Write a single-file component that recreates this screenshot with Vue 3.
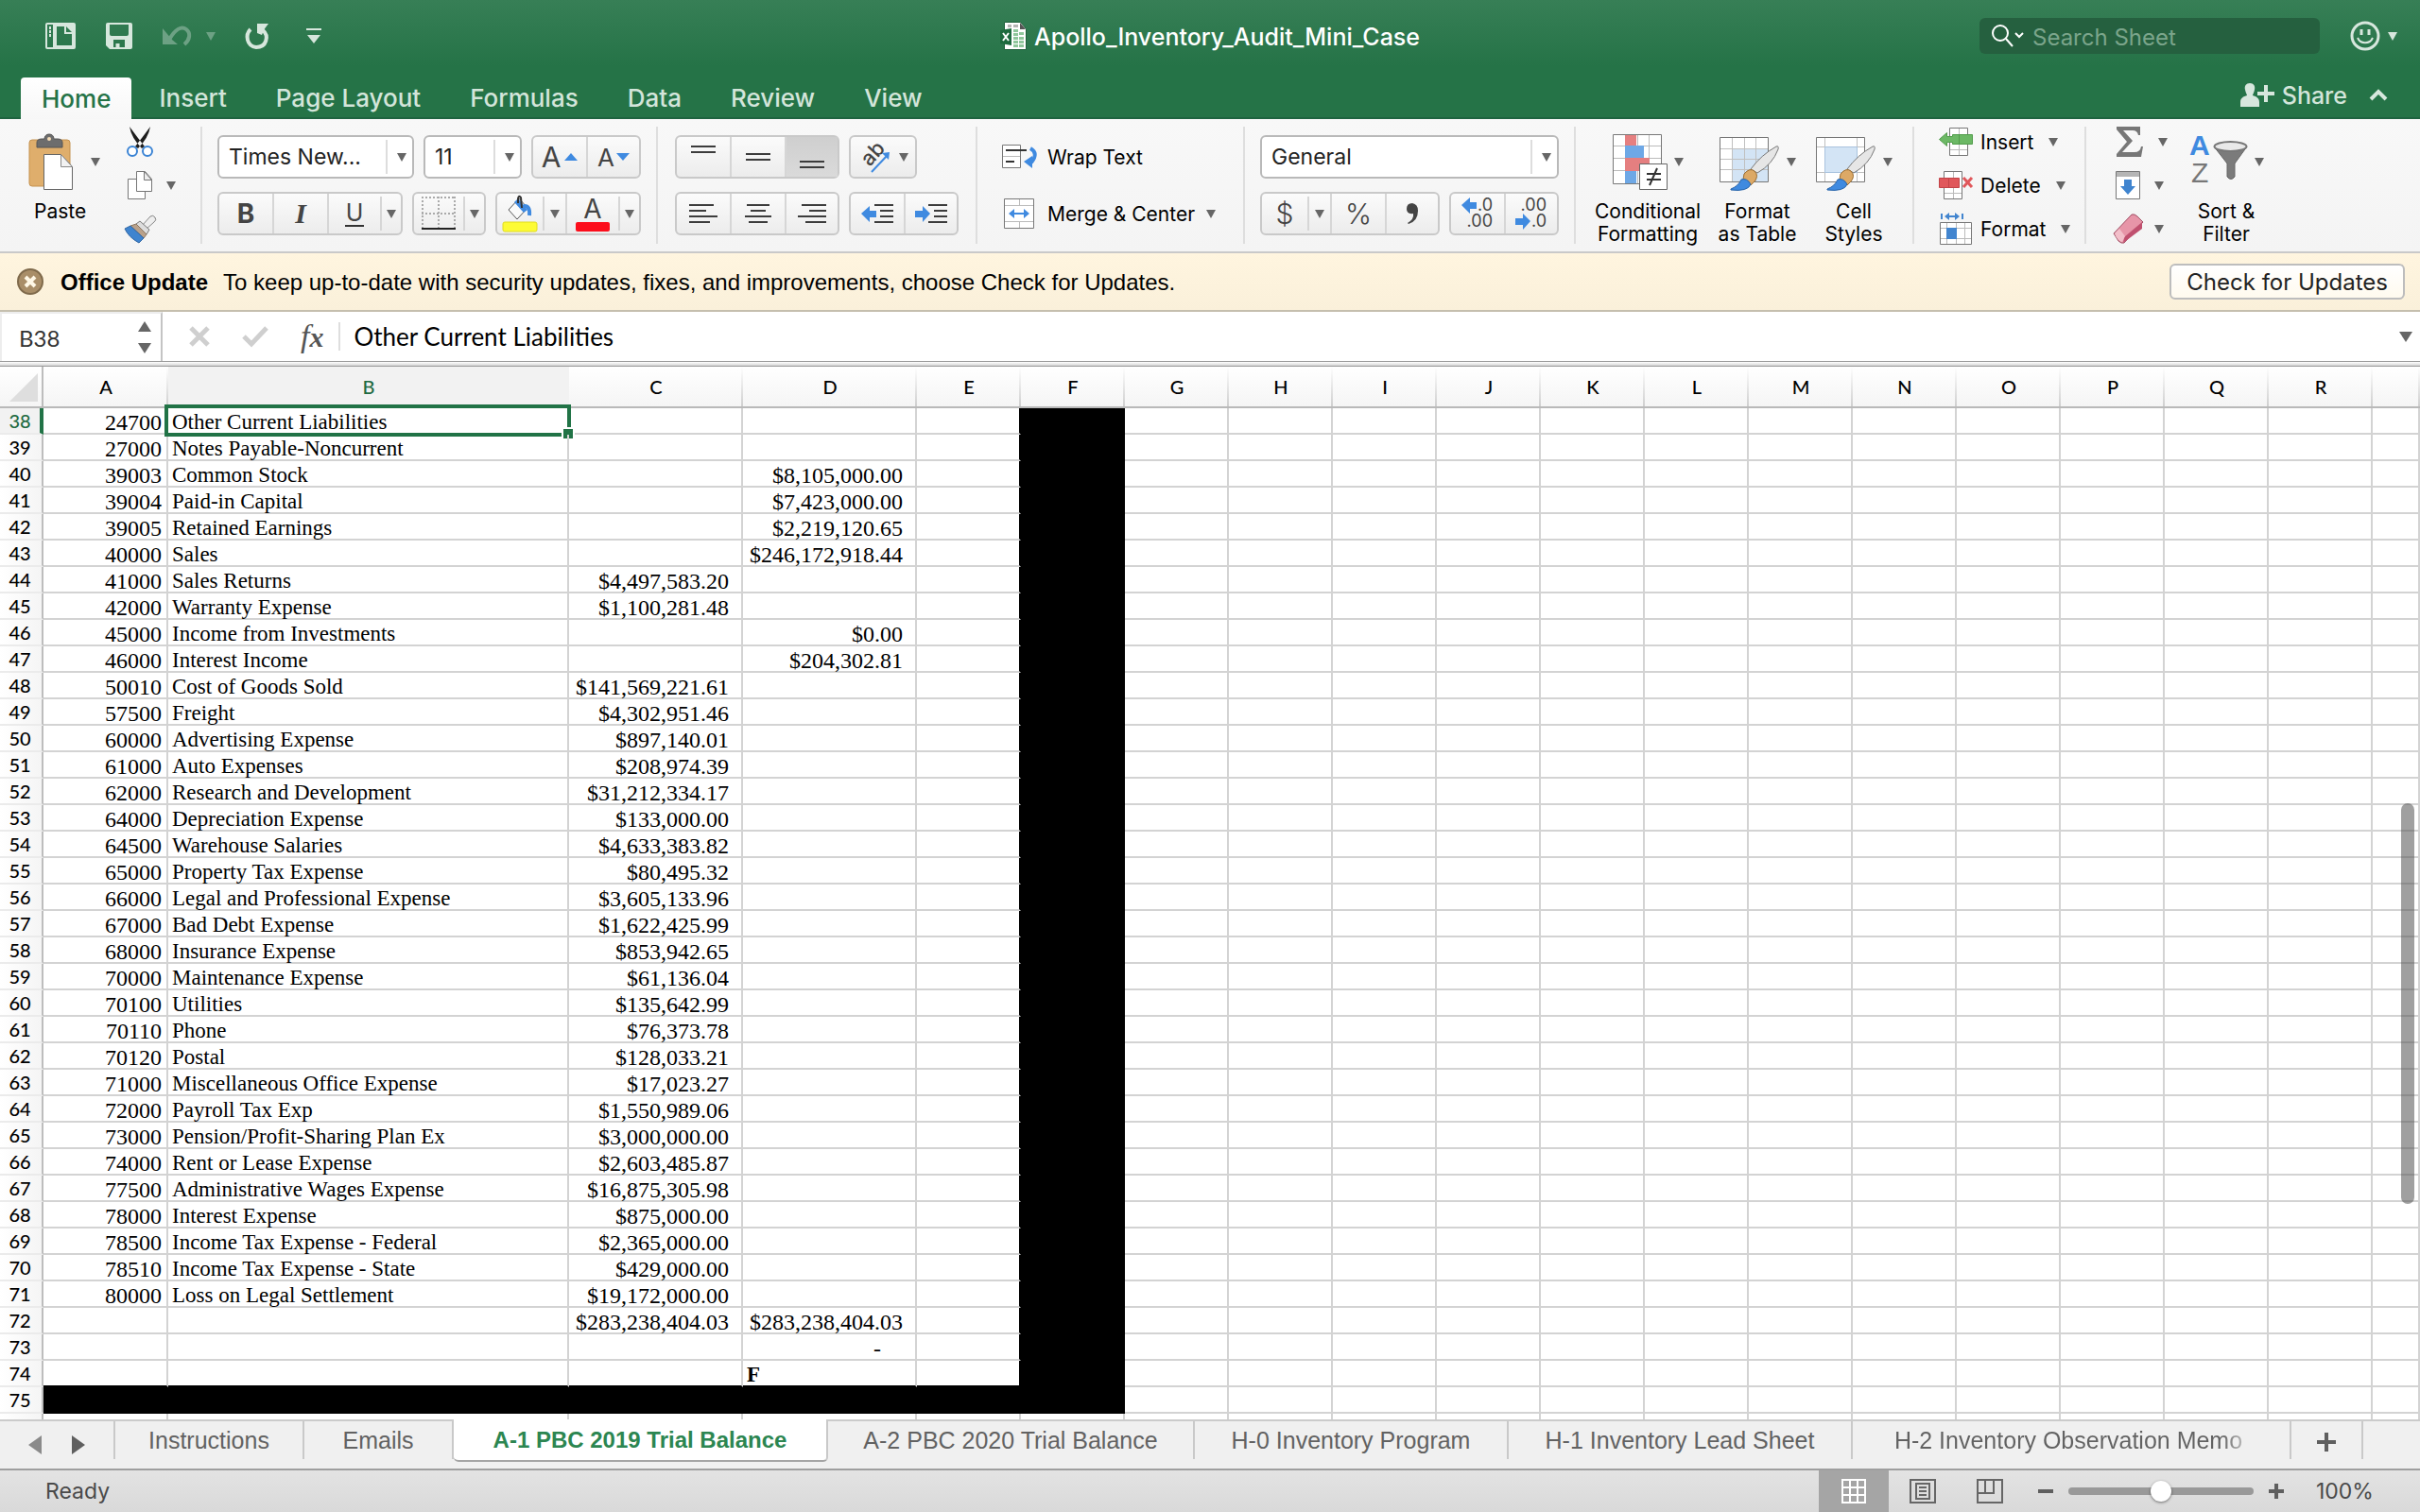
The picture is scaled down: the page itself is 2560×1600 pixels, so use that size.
<template>
  <div class="app">

    <header class="top">
      <div class="title-bar">
        <div class="quick">
          <button aria-label="Side panel">
            <svg width="32" height="28" viewBox="0 0 32 28">
              <path fill="#d7e7dd" fill-rule="evenodd" d="M2 0h28q2 0 2 2v24q0 2-2 2H2q-2 0-2-2V2q0-2 2-2zM2 2v24h6V2zM12 4v20h16V10l-6-6z" />
              <path fill="#d7e7dd" d="M4 4h2v3H4zM4 8h2v3H4zM4 12h2v3H4zM20 4h2v6h6v2h-8z" />
            </svg>
          </button>
          <button aria-label="Save">
            <svg width="28" height="28" viewBox="0 0 28 28">
              <path fill="#d7e7dd" fill-rule="evenodd" d="M2 0h24q2 0 2 2v24q0 2-2 2H4l-4-4V2q0-2 2-2zM4 2v10q0 2 2 2h16q2 0 2-2V2zM8 26h2.500v-4h4v4H20v-8H8z" />
            </svg>
          </button>
          <div class="undo">
            <button aria-label="Undo">
              <svg width="30" height="22" viewBox="0 0 30 22">
                <path fill="#6da184" d="M0 3v17h16l-6-5z" />
                <path fill="none" stroke="#6da184" stroke-width="4" d="M7 15C13 4 20 0 25 4c5 4 4 11-2 16" />
              </svg>
            </button>
            <i class="caret faded"></i>
          </div>
          <button aria-label="Repeat">
            <svg width="24" height="28" viewBox="0 0 24 28">
              <path fill="none" stroke="#d7e7dd" stroke-width="4" d="M5 7C-1 13 1 25 11 26c11 0 14-12 7-18" />
              <path fill="#d7e7dd" d="M12 1h12l-3 4-2 3-2 5-5-2z" />
            </svg>
          </button>
          <button class="customize" aria-label="Customize toolbar">
            <svg width="16" height="16" viewBox="0 0 16 16">
              <path fill="#d7e7dd" d="M0 0h16v2H0zM1 7h14l-7 9z" />
            </svg>
          </button>
        </div>

        <div class="doc">
          <svg width="28" height="30" viewBox="0 0 28 30">
            <path fill="#fff" stroke="#1d5f3a" d="M4.500.5h17l6 7v22h-23z" />
            <path fill="#b5b5b5" d="M8 3h4v3H8zM14 3h5v3h-5z" />
            <path fill="#8fc79b" d="M14 8h5v3h-5zM14 12h5v3h-5zM14 16h5v3h-5zM14 20h5v3h-5zM14 24h5v3h-5zM20 11h5v3h-5zM20 16h5v3h-5zM20 20h5v3h-5zM20 24h5v3h-5z" />
            <path fill="#555" d="M21 1v7h6z" />
            <path fill="#1d6a3e" d="M0 9l12-2v18L0 23z" />
            <path stroke="#fff" stroke-width="2" d="M3 12l6 8M9 12l-6 8" />
          </svg>
          <h1>Apollo_Inventory_Audit_Mini_Case</h1>
        </div>

        <div class="title-right">
          <label class="search">
            <svg width="36" height="26" viewBox="0 0 36 26" fill="none" stroke="#fff" stroke-width="2">
              <circle cx="10" cy="10" r="8" />
              <path d="M16 16l7 8M26 10l4 4 4-4" />
            </svg>
            <input type="text" placeholder="Search Sheet" aria-label="Search Sheet" />
          </label>
          <button class="smile" aria-label="Feedback">
            <svg width="32" height="32" viewBox="0 0 32 32" fill="none" stroke="#d7e7dd" stroke-width="3">
              <circle cx="16" cy="16" r="14" />
              <path d="M12 9v6M20 9v6" />
              <path stroke-width="2" d="M8 18c3 7 13 7 16 0" />
            </svg>
            <i class="caret pale"></i>
          </button>
        </div>
      </div>

      <nav class="tabs">
        <button v-for="tab in ribbonTabs" :key="tab" :class="{ active: tab === 'Home' }">{{ tab }}</button>
        <div class="share">
          <button>
            <svg width="36" height="26" viewBox="0 0 36 26" fill="#d7e7dd">
              <path d="M10 0c4 0 6 3 5 7-.5 3-2 5-2 6 4 1 7 3 7 7v5H0v-5c0-4 3-6 7-7 0-1-1.500-3-2-6-1-4 1-7 5-7z" />
              <path d="M25 2h4v7h7v4h-7v7h-4v-7h-7V9h7z" />
            </svg>
            Share
          </button>
          <button aria-label="Collapse ribbon">
            <svg width="20" height="12" viewBox="0 0 20 12" fill="none" stroke="#d7e7dd" stroke-width="4">
              <path d="M2 10l8-8 8 8" />
            </svg>
          </button>
        </div>
      </nav>
    </header>

    <section class="ribbon">
      <div class="group clipboard">
        <button class="paste">
          <span class="big-icon">
            <svg width="48" height="60" viewBox="0 0 48 60">
              <rect x="1" y="7" width="43" height="49" rx="3" fill="#dfae6c" stroke="#c4914e" />
              <path fill="#6d6d6d" stroke="#555" d="M9 10q0-4 5-4h3c0-3 2-5 5-5s5 2 5 5h4q5 0 5 4v5H9z" />
              <circle cx="22" cy="6" r="2" fill="#f4dcb8" />
              <path fill="#fff" stroke="#666" d="M16.500 22.500h18l12 13v24h-30z" />
              <path fill="#f2f2f2" stroke="#888" d="M34.500 22.500v13h12z" />
            </svg>
            <i class="caret"></i>
          </span>
          <span class="paste-label">Paste</span>
        </button>
        <div class="stack">
          <button aria-label="Cut">
            <svg width="32" height="32" viewBox="0 0 32 32">
              <path fill="#1c1c1c" d="M5 0q8 11 16 21l-3 2Q7 12 5 0zM27 0q-8 11-16 21l3 2Q25 12 27 0z" />
              <ellipse cx="8" cy="26" rx="5" ry="5" fill="#fff" stroke="#3a83d4" stroke-width="2" />
              <ellipse cx="24" cy="26" rx="5" ry="5" fill="#fff" stroke="#3a83d4" stroke-width="2" />
            </svg>
          </button>
          <button aria-label="Copy">
            <svg width="32" height="32" viewBox="0 0 32 32" fill="#fff" stroke="#777">
              <path d="M3.500 9.500h18v21h-18z" />
              <path d="M12.500 1.500h9l7 8v13h-16z" />
              <path fill="#eee" d="M20.500 1.500v9h8z" />
            </svg>
            <i class="caret"></i>
          </button>
          <button aria-label="Format painter">
            <svg width="32" height="32" viewBox="0 0 32 32">
              <path fill="#eee" stroke="#888" d="M18 13l9-10q3-2 5 1t-1 5L22 17z" />
              <path fill="#ddd" stroke="#777" d="M12 11l4-3 10 9-3 5z" />
              <path fill="#b9a18a" stroke="#8a7660" d="M6 13l6-2 11 11-3 4z" />
              <path fill="#3f84cf" stroke="#2f65a3" d="M0 16l6-3 14 13-5 5Q4 25 0 16z" />
            </svg>
          </button>
        </div>
      </div>

      <div class="group font">
        <div class="line">
          <span class="pick font-name">
            <select aria-label="Font"><option>Times New...</option></select>
            <i class="caret"></i>
          </span>
          <span class="pick font-size">
            <select aria-label="Font size"><option>11</option></select>
            <i class="caret"></i>
          </span>
          <div class="btns">
            <button class="w56 grow" aria-label="Increase font size"><span>A</span><i class="tri up"></i></button>
            <button class="w56 shrink" aria-label="Decrease font size"><span>A</span><i class="tri down"></i></button>
          </div>
        </div>
        <div class="line">
          <div class="btns">
            <button class="w56 bold">B</button>
            <button class="w58 italic">I</button>
            <button class="w56 under"><span>U</span></button>
            <button class="drop" aria-label="Underline options"><i class="caret"></i></button>
          </div>
          <div class="btns">
            <button class="w52" aria-label="Borders">
              <svg width="36" height="36" viewBox="0 0 36 36" fill="none">
                <path stroke="#aaa" stroke-width="2" stroke-dasharray="2 2" d="M0 1h36M1 0v34M18 0v34M35 0v34M0 18h36" />
                <path stroke="#222" stroke-width="2" d="M0 34h36" />
              </svg>
            </button>
            <button class="drop" aria-label="Border options"><i class="caret"></i></button>
          </div>
          <div class="btns">
            <button class="w48" aria-label="Fill color">
              <svg width="36" height="40" viewBox="0 0 36 40">
                <path fill="#fafafa" stroke="#555" d="M6 16L17 4l9 10-11 12z" />
                <path fill="#3f8ae0" d="M12 8l4-4 10 12-4 3z" />
                <path fill="none" stroke="#3f8ae0" stroke-width="4" d="M22 12q7-1 6 10" />
                <path fill="none" stroke="#333" stroke-width="2" d="M20 14l-1-11q-2-3-3 1v5" />
                <rect y="29" width="36" height="10" rx="2" fill="#fdfb35" stroke="#e0dc20" />
              </svg>
            </button>
            <button class="drop w24" aria-label="Fill options"><i class="caret"></i></button>
            <button class="w56 font-color" aria-label="Font color"><span>A</span><i></i></button>
            <button class="drop" aria-label="Font color options"><i class="caret"></i></button>
          </div>
        </div>
      </div>

      <div class="group align">
        <div class="line">
          <div class="btns">
            <button class="w56" aria-label="Top align"><svg width="26" height="32"><path d="M0 5h26M0 11h26" /></svg></button>
            <button class="w58" aria-label="Middle align"><svg width="26" height="32"><path d="M0 13h26M0 19h26" /></svg></button>
            <button class="w56 pressed" aria-label="Bottom align"><svg width="26" height="32"><path d="M0 21h26M0 27h26" /></svg></button>
          </div>
          <div class="btns">
            <button class="orient" aria-label="Orientation">
              <svg width="34" height="34" viewBox="0 0 34 34">
                <text x="0" y="0" transform="translate(13 28) rotate(-48)" class="svg-ab">ab</text>
                <path class="blue-line" d="M15 33L31 16" />
                <path class="arrow" d="M26 13l8-1-1 8z" />
              </svg>
              <i class="caret"></i>
            </button>
          </div>
        </div>
        <div class="line">
          <div class="btns">
            <button class="w56" aria-label="Align left"><svg width="30" height="22"><path d="M0 2h26M0 8h18M0 14h30M0 20h22" /></svg></button>
            <button class="w58" aria-label="Center"><svg width="28" height="22"><path d="M2 2h24M6 8h16M0 14h28M4 20h20" /></svg></button>
            <button class="w56" aria-label="Align right"><svg width="30" height="22"><path d="M4 2h26M12 8h18M0 14h30M8 20h22" /></svg></button>
          </div>
          <div class="btns">
            <button class="w56" aria-label="Decrease indent">
              <svg width="34" height="22"><path d="M14 2h20M20 8h14M20 14h14M14 20h20" /><path class="arrow" d="M0 11l9-8v5h7v7H9v5z" /></svg>
            </button>
            <button class="w56" aria-label="Increase indent">
              <svg width="34" height="22"><path d="M14 2h20M20 8h14M20 14h14M14 20h20" /><path class="arrow" d="M16 11L8 3v5H0v7h8v5z" /></svg>
            </button>
          </div>
        </div>
      </div>

      <div class="group wrap">
        <button class="row-btn">
          <svg width="40" height="32" viewBox="0 0 40 32">
            <path fill="#fff" stroke="#777" d="M.5 3.500h19v24H.5z" />
            <path stroke="#bbb" d="M1 15.500h18" />
            <path stroke="#333" stroke-width="2" d="M4 9h22M4 21h9" />
            <path fill="none" stroke="#3f8ae0" stroke-width="4" d="M30 7q9 5 1 15" />
            <path fill="#3f8ae0" d="M23 21l9-6v13z" />
          </svg>
          Wrap Text
        </button>
        <button class="row-btn">
          <svg width="40" height="34" viewBox="0 0 40 34">
            <path fill="#fff" stroke="#777" d="M2.500 1.500h31v31h-31z" />
            <path stroke="#bbb" d="M3 8.500h30M3 25.500h30M18.500 2v6M18.500 26v6" />
            <path class="blue-line" d="M10 17h16" />
            <path fill="#3f8ae0" d="M7 17l6-5v10zM29 17l-6-5v10z" />
          </svg>
          Merge &amp; Center
          <i class="caret"></i>
        </button>
      </div>

      <div class="group number">
        <div class="line">
          <span class="pick format">
            <select aria-label="Number format"><option>General</option></select>
            <i class="caret"></i>
          </span>
        </div>
        <div class="line">
          <div class="btns">
            <button class="w48 sign">$</button>
            <button class="drop w24" aria-label="Currency options"><i class="caret"></i></button>
            <button class="w58 sign">%</button>
            <button class="w56" aria-label="Comma style">
              <svg width="14" height="24" viewBox="0 0 14 24"><path class="solid" d="M2 22q7-4 6-10-7 1-7-5 0-6 6-6 6 1 6 8 0 11-10 14z" /></svg>
            </button>
          </div>
          <div class="btns">
            <button class="w56" aria-label="Increase decimal">
              <svg width="34" height="34" viewBox="0 0 34 34">
                <path class="arrow" d="M0 8l9-8v5h7v7H9v5z" />
                <text x="33" y="14" class="svg-num">.0</text><text x="33" y="31" class="svg-num">.00</text>
              </svg>
            </button>
            <button class="w56" aria-label="Decrease decimal">
              <svg width="34" height="34" viewBox="0 0 34 34">
                <path class="arrow" d="M16 25l-8-8v5H0v7h8v5z" />
                <text x="33" y="14" class="svg-num">.00</text><text x="33" y="31" class="svg-num">.0</text>
              </svg>
            </button>
          </div>
        </div>
      </div>

      <div class="group styles">
        <button class="tall wide">
          <span class="big-icon">
            <svg width="58" height="58" viewBox="0 0 58 58">
              <path fill="#fff" stroke="#777" d="M.5.5h51v52H.5z" />
              <path stroke="#bbb" d="M13.500 1v51M38.500 1v51M26.500 1v51M1 12.500h50M1 25.500h50M1 38.500h50" />
              <path fill="#e57f80" d="M13 1h12v11H13zM13 25h26v14H13z" />
              <path fill="#6ea8e6" d="M13 12h20v13H13zM13 39h12v13H13z" />
              <path fill="#fff" stroke="#666" d="M28.500 31.500h29v27h-29z" />
              <path stroke="#333" stroke-width="2" d="M36 42h15M36 48h15M47 36l-8 18" />
            </svg>
            <i class="caret"></i>
          </span>
          Conditional<br>Formatting
        </button>
        <button class="tall">
          <span class="big-icon">
            <svg width="64" height="58" viewBox="0 0 64 58">
              <path fill="#fff" stroke="#777" d="M.5 3.500h51v47H.5z" />
              <path fill="#d3e4f5" d="M13 15h38v35H13z" />
              <path stroke="#c0c0c0" d="M13.500 4v46M26.500 4v46M38.500 4v46M1 15.500h50M1 26.500h50M1 37.500h50" />
              <path fill="#e6e6e6" stroke="#777" d="M33 37Q44 22 60 13q3-1 2 3-6 16-22 25z" />
              <path fill="#dca966" stroke="#9a6d32" d="M26 42q6-7 11-3 5 5 0 11l-4 4-8-6z" />
              <path fill="#3f8ae0" stroke="#2763a8" d="M12 58q8-3 11-10 6-2 10 5-3 8-21 6z" />
            </svg>
            <i class="caret"></i>
          </span>
          Format<br>as Table
        </button>
        <button class="tall">
          <span class="big-icon">
            <svg width="64" height="58" viewBox="0 0 64 58">
              <path fill="#fff" stroke="#777" d="M.5 3.500h51v47H.5z" />
              <path stroke="#c0c0c0" d="M9.500 4v46M43.500 4v46M1 13.500h50M1 40.500h50" />
              <path fill="#d3e4f5" stroke="#a9c3de" d="M9.500 13.500h34v27h-34z" />
              <path fill="#e6e6e6" stroke="#777" d="M33 37Q44 22 60 13q3-1 2 3-6 16-22 25z" />
              <path fill="#dca966" stroke="#9a6d32" d="M26 42q6-7 11-3 5 5 0 11l-4 4-8-6z" />
              <path fill="#3f8ae0" stroke="#2763a8" d="M12 58q8-3 11-10 6-2 10 5-3 8-21 6z" />
            </svg>
            <i class="caret"></i>
          </span>
          Cell<br>Styles
        </button>
      </div>

      <div class="group cells">
        <button class="cell-btn">
          <svg width="36" height="32" viewBox="0 0 36 32">
            <path fill="#fff" stroke="#777" d="M11.500 1.500h19v29h-19z" />
            <path stroke="#bbb" d="M12 24.500h18M21.500 2v6M21.500 19v11" />
            <path fill="#6cb865" stroke="#519c4b" d="M.5 13.500l8-7v4h6v-2h21v10h-21v-2h-6v4z" />
            <path stroke="#519c4b" d="M21.500 9v9" />
          </svg>
          Insert
          <i class="caret"></i>
        </button>
        <button class="cell-btn">
          <svg width="36" height="32" viewBox="0 0 36 32">
            <path fill="#fff" stroke="#777" d="M5.500 1.500h19v29h-19z" />
            <path stroke="#bbb" d="M6 24.500h18M15.500 2v6M15.500 19v11" />
            <path fill="#e0575b" stroke="#c24448" d="M.5 8.500h21v10H.5z" />
            <path stroke="#c24448" d="M10.500 9v9" />
            <path stroke="#e0575b" stroke-width="3" d="M26 8l9 10M35 8l-9 10" />
          </svg>
          Delete
          <i class="caret"></i>
        </button>
        <button class="cell-btn">
          <svg width="36" height="36" viewBox="0 0 36 36">
            <path fill="#fff" stroke="#777" d="M1.500 11.500h33v23h-33z" />
            <path stroke="#bbb" d="M8.500 12v22M18.500 12v22M27.500 12v22M2 17.500h32M2 28.500h32" />
            <path fill="#4285cf" d="M8 17h11v12H8z" />
            <path stroke="#4285cf" stroke-width="2" d="M3 2v6M25 2v6M9 5h10" />
            <path fill="#4285cf" d="M6 5l5-4v8zM22 5l-5-4v8z" />
          </svg>
          Format
          <i class="caret"></i>
        </button>
      </div>

      <div class="group editing">
        <div class="stack">
          <button class="sum" aria-label="AutoSum">
            <svg width="32" height="32" viewBox="0 0 32 32">
              <path fill="#777" d="M4 0h25v9h-2q-1-5-6-5H11l10 11L10 27h13q6 0 7-6h2l-2 11H4v-3l11-13L4 3z" />
            </svg>
            <i class="caret"></i>
          </button>
          <button aria-label="Fill">
            <svg width="32" height="32" viewBox="0 0 32 32">
              <path fill="#fff" stroke="#777" d="M3.500 1.500h25v29h-25z" />
              <path fill="#b5b5b5" d="M4 2h24v5H4z" />
              <path fill="#3f84cf" d="M12 10h8v7h4l-8 9-8-9h4z" />
            </svg>
            <i class="caret"></i>
          </button>
          <button aria-label="Clear">
            <svg width="32" height="32" viewBox="0 0 32 32">
              <path fill="#e795a8" stroke="#a04f64" d="M1 21L20 1q3-1 6 2l6 6-20 22q-3 1-6-2z" />
              <path fill="#c0506f" d="M31 9v7L11 31l1-6z" />
              <path fill="#f2bfca" d="M2 21l5-5 6 8-3 6q-6-2-8-9z" />
            </svg>
            <i class="caret"></i>
          </button>
        </div>
        <button class="tall">
          <span class="big-icon">
            <svg width="62" height="58" viewBox="0 0 62 58">
              <text x="0" y="22" class="az blue">A</text>
              <text x="2" y="51" class="az grey">Z</text>
              <path fill="#7b7b7b" stroke="#666" d="M26 13l14 18v14q4 5 8 0V31l13-18z" />
              <ellipse cx="43.500" cy="13" rx="17" ry="5" fill="#e9e9e9" stroke="#777" stroke-width="2" />
            </svg>
            <i class="caret"></i>
          </span>
          Sort &amp;<br>Filter
        </button>
      </div>
    </section>

    <section class="update">
      <button aria-label="Dismiss">
        <svg width="28" height="28" viewBox="0 0 28 28">
          <circle cx="14" cy="14" r="13" fill="#a98e68" stroke="#7f6a4b" stroke-width="2" />
          <path stroke="#fff8e6" stroke-width="4" d="M9 9l10 10M19 9L9 19" />
        </svg>
      </button>
      <p><strong>Office Update</strong>To keep up-to-date with security updates, fixes, and improvements, choose Check for Updates.</p>
      <button class="check">Check for Updates</button>
    </section>

    <section class="formula">
      <div class="name-box">
        <input type="text" value="B38" aria-label="Name box" />
        <button aria-label="Named cells"><i class="tri-up"></i><i class="tri-down"></i></button>
      </div>
      <div class="formula-tools">
        <button aria-label="Cancel">
          <svg width="22" height="22" viewBox="0 0 22 22"><path d="M2 2l18 18M20 2L2 20" /></svg>
        </button>
        <button aria-label="Enter">
          <svg width="28" height="22" viewBox="0 0 28 22"><path d="M2 11l8 8L26 2" /></svg>
        </button>
        <button class="fx"><span>f</span><span>x</span></button>
      </div>
      <input class="formula-text" type="text" value="Other Current Liabilities" aria-label="Formula" />
      <button class="expand" aria-label="Expand formula bar"><i class="tri-down"></i></button>
    </section>
    <div class="divider"></div>

    <main class="sheet">
      <table>
        <colgroup>
          <col class="c-num">
          <col v-for="col in columns" :key="col.name" :style="{ width: col.width + 'px' }">
          <col>
        </colgroup>
        <thead>
          <tr>
            <th class="corner"><svg width="30" height="30" viewBox="0 0 30 30"><path fill="#dedede" d="M30 0v30H0z" /></svg></th>
            <th v-for="col in columns" :key="col.name" :class="{ current: col.name === 'B' }">{{ col.name }}</th>
            <th></th>
          </tr>
        </thead>
        <tbody>
          <tr v-for="row in rows" :key="row.n" :class="{ black: row.n === 75 }">
            <th :class="{ current: row.n === 38 }">{{ row.n }}</th>
            <td class="acct">{{ row.a }}</td>
            <td class="name">
              {{ row.b }}
              <div v-if="row.n === 38" class="cursor"><i></i></div>
            </td>
            <td class="money">{{ row.c }}</td>
            <td class="money" :class="{ dash: row.n === 73, tick: row.n === 74 }">{{ row.d }}</td>
            <td class="edge"></td>
            <td class="bar"></td>
            <td v-for="k in 13" :key="k"></td>
          </tr>
          <tr>
            <th></th>
            <td v-for="k in 19" :key="k"></td>
          </tr>
        </tbody>
      </table>
      <div class="scroll-thumb"></div>
    </main>

    <nav class="sheet-tabs">
      <div class="arrows">
        <button aria-label="Previous sheet"><i class="left"></i></button>
        <button aria-label="Next sheet"><i class="right"></i></button>
      </div>
      <button
        v-for="sheet in sheets"
        :key="sheet.name"
        class="sheet-tab"
        :class="{ active: sheet.active, last: sheet.last }"
        :style="{ width: sheet.width + 'px' }"
      ><span>{{ sheet.name }}</span></button>
      <button class="add" aria-label="Add sheet">
        <svg width="20" height="20" viewBox="0 0 20 20"><path stroke="#5f5f5f" stroke-width="4" d="M10 0v20M0 10h20" /></svg>
      </button>
    </nav>

    <footer class="status">
      <span class="ready">Ready</span>
      <button class="view on" aria-label="Normal view">
        <svg width="26" height="26" viewBox="0 0 26 26" fill="none" stroke="#fff" stroke-width="2">
          <path d="M1 1h24v24H1zM9 1v24M17 1v24M1 9h24M1 17h24" />
        </svg>
      </button>
      <button class="view" aria-label="Page layout view">
        <svg width="28" height="26" viewBox="0 0 28 26" fill="none" stroke="#666" stroke-width="2">
          <path d="M1 1h26v24H1zM7 5h14v16H7zM10 9h8M10 13h8M10 17h8" />
        </svg>
      </button>
      <button class="view" aria-label="Page break view">
        <svg width="28" height="26" viewBox="0 0 28 26" fill="none" stroke="#666" stroke-width="2">
          <path d="M1 1h26v24H1zM9 1v14M18 1v14H1" />
        </svg>
      </button>
      <button class="zoom out" aria-label="Zoom out"><svg width="16" height="16"><path d="M0 8h16" /></svg></button>
      <input v-model="zoom" type="range" min="0" max="200" aria-label="Zoom" />
      <button class="zoom" aria-label="Zoom in"><svg width="16" height="16"><path d="M0 8h16M8 0v16" /></svg></button>
      <span class="percent">{{ zoom }}%</span>
    </footer>

  </div>
</template>


<script setup>
import { ref } from "vue";

const zoom = ref(100);

const ribbonTabs = ["Home", "Insert", "Page Layout", "Formulas", "Data", "Review", "View"];

const columns = [
  { name: "A", width: 132 },
  { name: "B", width: 424 },
  { name: "C", width: 184 },
  { name: "D", width: 184 },
  ...[..."EFGHIJKLMNOPQR"].map((name) => ({ name, width: 110 }))
];

const sheets = [
  { name: "Instructions", width: 200 },
  { name: "Emails", width: 158 },
  { name: "A-1 PBC 2019 Trial Balance", width: 396, active: true },
  { name: "A-2 PBC 2020 Trial Balance", width: 388 },
  { name: "H-0 Inventory Program", width: 332 },
  { name: "H-1 Inventory Lead Sheet", width: 364 },
  { name: "H-2 Inventory Observation Memo", width: 464, last: true }
];

// account number, name, debit, credit
const entries = [
  ["24700", "Other Current Liabilities"],
  ["27000", "Notes Payable-Noncurrent"],
  ["39003", "Common Stock", "", "$8,105,000.00"],
  ["39004", "Paid-in Capital", "", "$7,423,000.00"],
  ["39005", "Retained Earnings", "", "$2,219,120.65"],
  ["40000", "Sales", "", "$246,172,918.44"],
  ["41000", "Sales Returns", "$4,497,583.20"],
  ["42000", "Warranty Expense", "$1,100,281.48"],
  ["45000", "Income from Investments", "", "$0.00"],
  ["46000", "Interest Income", "", "$204,302.81"],
  ["50010", "Cost of Goods Sold", "$141,569,221.61"],
  ["57500", "Freight", "$4,302,951.46"],
  ["60000", "Advertising Expense", "$897,140.01"],
  ["61000", "Auto Expenses", "$208,974.39"],
  ["62000", "Research and Development", "$31,212,334.17"],
  ["64000", "Depreciation Expense", "$133,000.00"],
  ["64500", "Warehouse Salaries", "$4,633,383.82"],
  ["65000", "Property Tax Expense", "$80,495.32"],
  ["66000", "Legal and Professional Expense", "$3,605,133.96"],
  ["67000", "Bad Debt Expense", "$1,622,425.99"],
  ["68000", "Insurance Expense", "$853,942.65"],
  ["70000", "Maintenance Expense", "$61,136.04"],
  ["70100", "Utilities", "$135,642.99"],
  ["70110", "Phone", "$76,373.78"],
  ["70120", "Postal", "$128,033.21"],
  ["71000", "Miscellaneous Office Expense", "$17,023.27"],
  ["72000", "Payroll Tax Exp", "$1,550,989.06"],
  ["73000", "Pension/Profit-Sharing Plan Ex", "$3,000,000.00"],
  ["74000", "Rent or Lease Expense", "$2,603,485.87"],
  ["77500", "Administrative Wages Expense", "$16,875,305.98"],
  ["78000", "Interest Expense", "$875,000.00"],
  ["78500", "Income Tax Expense - Federal", "$2,365,000.00"],
  ["78510", "Income Tax Expense - State", "$429,000.00"],
  ["80000", "Loss on Legal Settlement", "$19,172,000.00"],
  ["", "", "$283,238,404.03", "$283,238,404.03"],
  ["", "", "", "-"],
  ["", "", "", "F"],
  []
];

const rows = entries.map(([a, b, c, d], i) => ({ n: 38 + i, a, b, c, d }));
</script>

<style>
body {
  margin: 0;
}
</style>

<style scoped>
.app {
  height: 100vh;
  display: flex;
  flex-direction: column;
  overflow: hidden;
  background: #fff;
  color: #000;
  font-family: Inter, "Liberation Sans", sans-serif;
  font-size: 21px;
}

.app * {
  box-sizing: border-box;
}

button {
  padding: 0;
  border: 0;
  background: none;
  color: inherit;
  font: inherit;
  white-space: nowrap;
}

svg {
  display: block;
  flex: none;
  overflow: visible;
}

input,
select {
  min-width: 0;
  margin: 0;
  padding: 0;
  border: 0;
  outline: none;
  background: none;
  color: inherit;
  font: inherit;
}

.caret {
  flex: none;
  border: 5px solid transparent;
  border-top: 9px solid #666;
  border-bottom: 0;
}

.caret.faded {
  border-top-color: #6da184;
}

.caret.pale {
  border-top-color: #d7e7dd;
}

/* green header */
.top {
  flex: none;
  background: linear-gradient(#377f56, #257347 70px);
  border-bottom: 2px solid #1e6340;
}

.title-bar {
  height: 76px;
  display: grid;
  grid-template-columns: 1fr auto 1fr;
  align-items: center;
}

.quick {
  display: flex;
  align-items: center;
  gap: 32px;
  padding-left: 48px;
}

.undo {
  display: flex;
  align-items: center;
  gap: 16px;
}

.customize {
  width: 32px;
  display: flex;
  justify-content: center;
}

.doc {
  display: flex;
  align-items: center;
  gap: 8px;
}

.doc h1 {
  margin: 0;
  padding-top: 2px;
  color: #fff;
  font-size: 25px;
  font-weight: 500;
}

.title-right {
  display: flex;
  align-items: center;
  justify-content: flex-end;
  gap: 32px;
  padding-right: 24px;
}

.search {
  width: 360px;
  height: 38px;
  display: flex;
  align-items: center;
  gap: 8px;
  padding: 0 12px;
  border-radius: 6px;
  background: #25603f;
}

.search input {
  flex: 1;
  padding-top: 2px;
  color: #fff;
  font-size: 24px;
}

.search input::placeholder {
  color: #7ba58b;
}

.smile {
  display: flex;
  align-items: center;
  gap: 8px;
}

.tabs {
  height: 48px;
  display: flex;
  align-items: flex-end;
  gap: 6px;
  padding-left: 22px;
  color: #d3e5da;
  font-size: 26px;
  font-weight: 500;
}

.tabs > button {
  height: 42px;
  padding: 0 23px;
}

.tabs > .active {
  height: 44px;
  margin-bottom: -2px;
  padding: 0 22px;
  border-radius: 4px 4px 0 0;
  background: linear-gradient(#fff, #f7f7f7);
  color: #257347;
}

.share {
  height: 46px;
  display: flex;
  align-items: center;
  gap: 23px;
  margin-left: auto;
  padding-right: 34px;
  font-size: 25px;
}

.share button {
  display: flex;
  align-items: center;
  gap: 8px;
}

/* ribbon */
.ribbon {
  flex: none;
  height: 142px;
  display: flex;
  border-bottom: 2px solid #c9c9c9;
  background: linear-gradient(#f8f8f8, #f4f4f4);
}

.group {
  flex: none;
  display: flex;
  margin: 8px 0;
  border-right: 2px solid #dedede;
}

.clipboard {
  gap: 26px;
  padding: 0 26px 0 30px;
}

.font,
.align,
.wrap,
.number {
  flex-direction: column;
  justify-content: center;
  gap: 14px;
  padding: 0 16px;
}

.align {
  padding: 0 18px;
}

.wrap {
  width: 283px;
  padding: 0 0 0 26px;
}

.styles {
  gap: 18px;
  padding: 0 20px;
}

.cells {
  width: 182px;
  flex-direction: column;
  gap: 14px;
  padding-left: 26px;
}

.editing {
  gap: 20px;
  padding-left: 28px;
  border-right: 0;
}

.big-icon {
  height: 66px;
  display: flex;
  align-items: center;
  gap: 7px;
  padding-top: 8px;
  margin-bottom: 12px;
}

.tall {
  width: 84px;
  align-self: flex-start;
  line-height: 24px;
  text-align: center;
}

.tall .big-icon {
  justify-content: center;
}

.wide {
  width: 112px;
}

.paste {
  align-self: flex-start;
  line-height: 24px;
  text-align: left;
}

.paste .big-icon {
  gap: 18px;
}

.paste-label {
  padding-left: 6px;
}

.stack {
  display: flex;
  flex-direction: column;
  gap: 14px;
}

.stack button {
  height: 32px;
  display: flex;
  align-items: center;
  gap: 12px;
}

.stack .sum {
  gap: 16px;
}

.line {
  display: flex;
  gap: 10px;
}

.pick {
  height: 46px;
  display: grid;
  align-items: center;
}

.pick select,
.pick .caret {
  grid-area: 1 / 1;
}

.pick select {
  height: 46px;
  padding: 0 30px 0 10px;
  appearance: none;
  border: 2px solid #b9b9b9;
  border-radius: 6px;
  background: linear-gradient(#ddd, #ddd) right 26px center / 2px 36px no-repeat, #fff;
  color: #222;
  font-size: 23px;
}

.pick .caret {
  justify-self: end;
  margin-right: 8px;
  pointer-events: none;
}

.font-name {
  width: 208px;
}

.font-size {
  width: 104px;
}

.format {
  width: 316px;
}

.btns {
  height: 46px;
  display: flex;
  border: 2px solid #c9c9c9;
  border-radius: 6px;
  background: linear-gradient(#fbfbfb, #ececec);
  color: #444;
}

.btns button {
  display: flex;
  align-items: center;
  justify-content: center;
  border-left: 2px solid #d6d6d6;
}

.btns button:first-child,
.btns .drop {
  border-left: 0;
}

.btns .drop {
  width: 22px;
  padding-left: 2px;
  background: linear-gradient(#d6d6d6, #d6d6d6) left center / 2px 36px no-repeat;
}

.w48 {
  width: 48px;
}

.w52 {
  width: 52px;
}

.w56 {
  width: 56px;
}

.w58 {
  width: 58px;
}

.btns .w24 {
  width: 24px;
}

.btns .pressed {
  background: linear-gradient(#cfcfcf, #dadada);
}

.align .btns svg {
  fill: none;
  stroke: #3c3c3c;
  stroke-width: 2;
}

.align .btns .svg-ab {
  fill: #444;
  stroke: none;
  font-size: 22px;
  font-weight: 500;
}

.align .btns .arrow,
.arrow {
  fill: #3f8ae0;
  stroke: none;
}

.align .btns .blue-line,
.blue-line {
  stroke: #3f8ae0;
  stroke-width: 2;
}

.solid {
  fill: #444;
}

.svg-num {
  fill: #444;
  font-size: 18px;
  text-anchor: end;
}

.az {
  font-family: "Liberation Sans", sans-serif;
  font-size: 30px;
}

.blue {
  fill: #3f8ae0;
  font-weight: 700;
}

.grey {
  fill: #777;
}

.orient {
  width: 68px;
  gap: 10px;
}

.grow {
  gap: 4px;
  font-size: 30px;
}

.shrink {
  gap: 2px;
  font-size: 26px;
}

.tri {
  border: 7px solid transparent;
}

.tri.up {
  border-top: 0;
  border-bottom: 8px solid #3f8ae0;
}

.tri.down {
  border-bottom: 0;
  border-top: 8px solid #3f8ae0;
}

.bold {
  font-size: 28px;
  font-weight: 700;
}

.italic {
  font-family: "Liberation Serif", serif;
  font-size: 30px;
  font-style: italic;
  font-weight: 700;
}

.under span {
  padding: 0 1px;
  border-bottom: 2px solid #333;
  font-size: 25px;
  line-height: 26px;
}

.btns .font-color {
  flex-direction: column;
}

.font-color span {
  font-size: 28px;
  line-height: 28px;
}

.font-color i {
  width: 36px;
  height: 10px;
  border-radius: 2px;
  background: #fc0d1b;
}

.sign {
  font-size: 30px;
  font-weight: 300;
}

.row-btn {
  height: 46px;
  display: flex;
  align-items: center;
  gap: 8px;
}

.row-btn .caret {
  margin-left: 4px;
}

.cell-btn {
  height: 32px;
  display: flex;
  align-items: center;
  gap: 8px;
}

.cell-btn .caret {
  margin-left: 8px;
}

/* update message */
.update {
  flex: none;
  height: 62px;
  display: flex;
  align-items: center;
  gap: 18px;
  padding: 0 16px 0 18px;
  border-bottom: 2px solid #c5bfae;
  background: linear-gradient(#fff5df, #faf0da);
  font-family: "Liberation Sans", sans-serif;
  font-size: 24px;
}

.update p {
  margin: 0;
  padding-top: 2px;
}

.update strong {
  margin-right: 16px;
}

.update .check {
  height: 38px;
  margin-left: auto;
  padding: 0 16px;
  border: 2px solid #bdbdbd;
  border-radius: 6px;
  background: linear-gradient(#fff, #fffaee);
  color: #222;
  font-family: Inter, sans-serif;
  font-size: 24px;
}

/* formula bar */
.formula {
  flex: none;
  height: 52px;
  display: flex;
  align-items: center;
  font-family: Lato, sans-serif;
}

.name-box {
  width: 172px;
  align-self: stretch;
  display: flex;
  align-items: center;
  border: 2px solid #ededed;
  border-right-color: #c4c4c4;
  border-bottom: 0;
}

.name-box input {
  width: 144px;
  padding-left: 18px;
  color: #333;
  font-size: 24px;
}

.name-box button {
  display: flex;
  flex-direction: column;
  gap: 12px;
}

.tri-up,
.tri-down {
  display: block;
  border: 7px solid transparent;
}

.tri-up {
  border-top: 0;
  border-bottom: 11px solid #666;
}

.tri-down {
  border-bottom: 0;
  border-top: 11px solid #666;
}

.formula-tools {
  height: 30px;
  display: flex;
  align-items: center;
  gap: 34px;
  padding: 0 16px 0 28px;
  border-right: 2px solid #dedede;
}

.formula-tools svg {
  fill: none;
  stroke: #cfcfcf;
  stroke-width: 5;
}

.fx {
  color: #555;
  font-family: "Liberation Serif", serif;
  font-size: 34px;
  font-style: italic;
  line-height: 30px;
}

.fx span + span {
  font-weight: 700;
  font-size: 30px;
}

.formula-text {
  flex: 1;
  padding-left: 14px;
  font-size: 26px;
}

.expand {
  margin-right: 8px;
}

.divider {
  flex: none;
  height: 6px;
  border-top: 1px solid #9a9a9a;
  border-bottom: 1px solid #9a9a9a;
  background: linear-gradient(#fff, #d5d5d5);
}

/* grid */
.sheet {
  flex: 1;
  min-height: 0;
  position: relative;
  overflow: hidden;
}

table {
  width: 100%;
  table-layout: fixed;
  border-collapse: separate;
  border-spacing: 0;
}

.c-num {
  width: 46px;
}

th {
  font-family: Lato, sans-serif;
  font-size: 20px;
  font-weight: 500;
}

thead th {
  height: 44px;
  padding: 0;
  border-bottom: 2px solid #b9b9b9;
  background: linear-gradient(#fff, #cfcfcf) right / 2px 100% no-repeat, linear-gradient(#fff, #f5f5f5);
}

thead .current {
  background: #f2f2f2;
  color: #1f6b42;
}

thead .corner {
  background: linear-gradient(#bdbdbd, #bdbdbd) right / 2px 100% no-repeat, linear-gradient(#fff, #f5f5f5);
}

.corner svg {
  margin: 2px 0 0 10px;
}

tbody th,
td {
  height: 28px;
  padding: 0;
  line-height: 26px;
}

tbody th {
  padding-right: 2px;
  border-right: 2px solid #bdbdbd;
  border-bottom: 2px solid #ebebeb;
  background: linear-gradient(90deg, #fff, #f5f5f5);
}

tbody .current {
  padding-right: 0;
  border-right: 4px solid #217346;
  background: #f2f2f2;
  color: #1f6b42;
}

td {
  padding-top: 4px;
  border-right: 2px solid #d3d3d3;
  border-bottom: 2px solid #d3d3d3;
  font-family: "Liberation Serif", serif;
  font-size: 23px;
  line-height: 22px;
  white-space: nowrap;
}

.acct,
.money {
  font-size: 24px;
  text-align: right;
}

.acct {
  padding-right: 5px;
}

.money {
  padding-right: 13px;
}

.name {
  position: relative;
  padding-left: 4px;
}

.dash {
  padding-right: 36px;
}

.tick {
  padding-left: 4px;
  font-size: 23px;
  text-align: left;
  font-weight: 700;
}

.edge {
  border-right-color: #000;
}

.bar,
.black td:nth-child(-n + 7) {
  border-color: #000;
  background: #000;
}

/* row above the black one shares its edge */
tr:nth-last-child(3) td:nth-child(-n + 7) {
  border-bottom-color: #000;
}

.cursor {
  position: absolute;
  inset: -4px;
  border: 4px solid #217346;
}

.cursor i {
  position: absolute;
  right: -6px;
  bottom: -6px;
  width: 10px;
  height: 10px;
  background: #217346;
  box-shadow: 0 0 0 2px #fff;
}

.scroll-thumb {
  position: absolute;
  top: 41.5%;
  right: 6px;
  width: 14px;
  height: 38%;
  border-radius: 7px;
  background: rgba(80, 80, 80, .54);
}

/* sheet tabs */
.sheet-tabs {
  flex: none;
  height: 54px;
  display: flex;
  align-items: flex-start;
  border-top: 2px solid #cbcbcb;
  border-bottom: 2px solid #9f9f9f;
  background: #f0f0f0;
  color: #626262;
  font-family: "Liberation Sans", sans-serif;
  font-size: 25px;
}

.arrows {
  width: 122px;
  height: 40px;
  display: flex;
  align-items: center;
  gap: 32px;
  padding: 10px 0 0 30px;
  border-right: 2px solid #c9c9c9;
}

.arrows i {
  display: block;
  border: 10px solid transparent;
}

.arrows .left {
  border-left: 0;
  border-right: 14px solid #8a8a8a;
}

.arrows .right {
  border-right: 0;
  border-left: 14px solid #5f5f5f;
}

.sheet-tab {
  flex: none;
  height: 40px;
  border-right: 2px solid #c9c9c9;
}

.sheet-tab.active {
  height: 45px;
  margin-top: -2px;
  border-bottom: 2px solid #a5a5a5;
  border-radius: 0 0 5px 5px;
  background: #fff;
  color: #2c8651;
  font-size: 24px;
  font-weight: 700;
}

.last {
  padding-right: 6px;
}

/* long name fades out before the add button */
.last span {
  background: linear-gradient(90deg, #626262 94%, #b5b5b5);
  background-clip: text;
  color: transparent;
}

.add {
  width: 76px;
  height: 40px;
  display: flex;
  align-items: center;
  justify-content: center;
  padding-top: 4px;
  border-right: 2px solid #c9c9c9;
}

/* status bar */
.status {
  flex: none;
  height: 44px;
  display: flex;
  align-items: center;
  background: linear-gradient(#e3e3e3, #d9d9d9);
  color: #4a4a4a;
  font-size: 23px;
}

.ready {
  margin-right: auto;
  padding-left: 48px;
}

.view {
  width: 71px;
  height: 44px;
  display: flex;
  align-items: center;
  justify-content: center;
}

.view.on {
  width: 74px;
  background: #a5a5a5;
}

.zoom svg {
  fill: none;
  stroke: #5f5f5f;
  stroke-width: 4;
}

.zoom.out {
  margin-left: 16px;
}

.status input {
  width: 196px;
  height: 24px;
  margin: 0 16px;
  appearance: none;
}

.status input::-webkit-slider-runnable-track {
  height: 8px;
  border-radius: 4px;
  background: #999;
}

.status input::-webkit-slider-thumb {
  width: 22px;
  height: 22px;
  margin-top: -7px;
  appearance: none;
  border-radius: 50%;
  background: #fff;
  box-shadow: 0 1px 3px rgba(0, 0, 0, .5);
}

.percent {
  width: 144px;
  padding-left: 34px;
}
</style>
